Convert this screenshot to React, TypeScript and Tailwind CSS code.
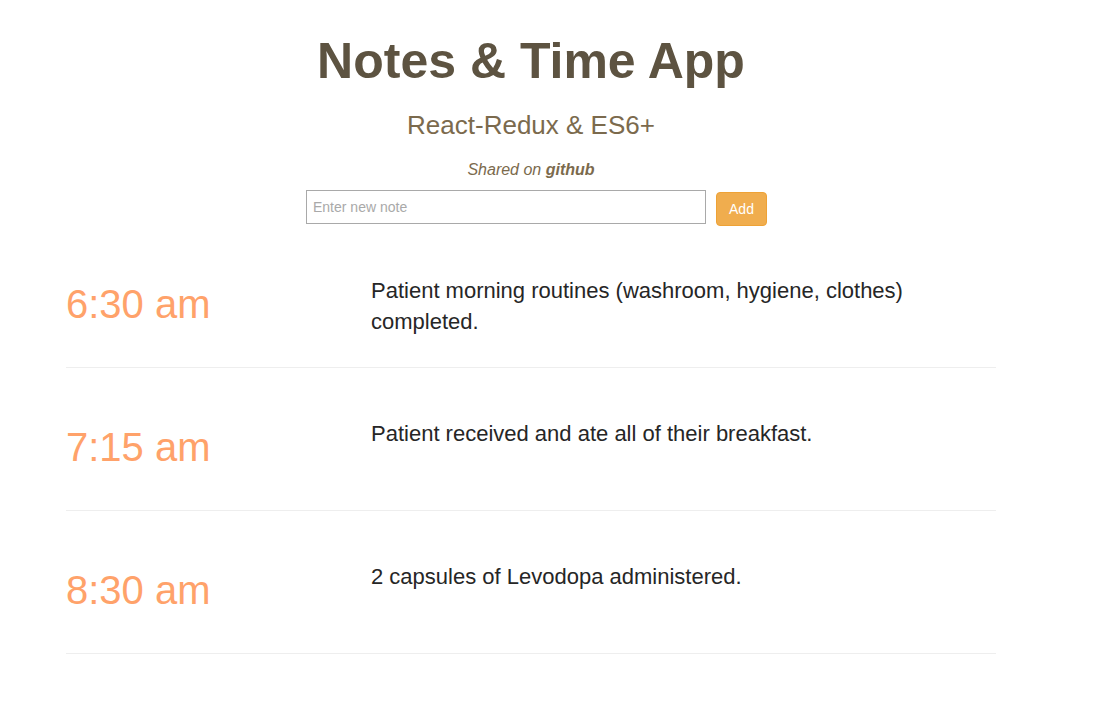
import React from "react";

const notes = [
  { time: "6:30 am", text: "Patient morning routines (washroom, hygiene, clothes) completed." },
  { time: "7:15 am", text: "Patient received and ate all of their breakfast." },
  { time: "8:30 am", text: "2 capsules of Levodopa administered." },
];

export default function App() {
  return (
    <div className="min-h-[722px] w-full bg-white" style={{ fontFamily: '"Liberation Sans", Arial, Helvetica, sans-serif' }}>
      <div className="ml-[66px] w-[930px]">
        <h1 className="pt-[34px] text-center text-[50px] font-bold leading-[55px] text-[#5d5341]">Notes &amp; Time App</h1>
        <h2 className="mt-[22px] text-center text-[26px] leading-[29px] text-[#7b6a4d]">React-Redux &amp; ES6+</h2>
        <p className="mt-[18px] text-center text-[16px] italic leading-[23px] text-[#7b6a4d]">
          Shared on <b className="font-bold">github</b>
        </p>
        <div className="mt-[9px] flex h-[35px] items-start justify-center gap-[10px] pl-[11px]">
          <input
            type="text"
            placeholder="Enter new note"
            className="h-[34px] w-[400px] border border-[#a9a9a9] bg-white px-[6px] text-[14px] text-[#333] outline-none placeholder:text-[#a9a9a9]"
          />
          <button className="mt-[2px] h-[34px] w-[51px] rounded-[4px] border border-[#eea236] bg-[#f0ad4e] text-[14px] text-white">
            Add
          </button>
        </div>
        <div>
          {notes.map((n) => (
            <div key={n.time} className="flex h-[143px] border-b border-[#eeeeee]">
              <div className="w-[305px] shrink-0 pt-[56px] text-[40px] leading-[46px] text-[#ffa26a]">{n.time}</div>
              <div className="flex-1 pt-[50px] pr-[4px] text-[22px] leading-[31px] text-[#262626]">{n.text}</div>
            </div>
          ))}
        </div>
      </div>
    </div>
  );
}
